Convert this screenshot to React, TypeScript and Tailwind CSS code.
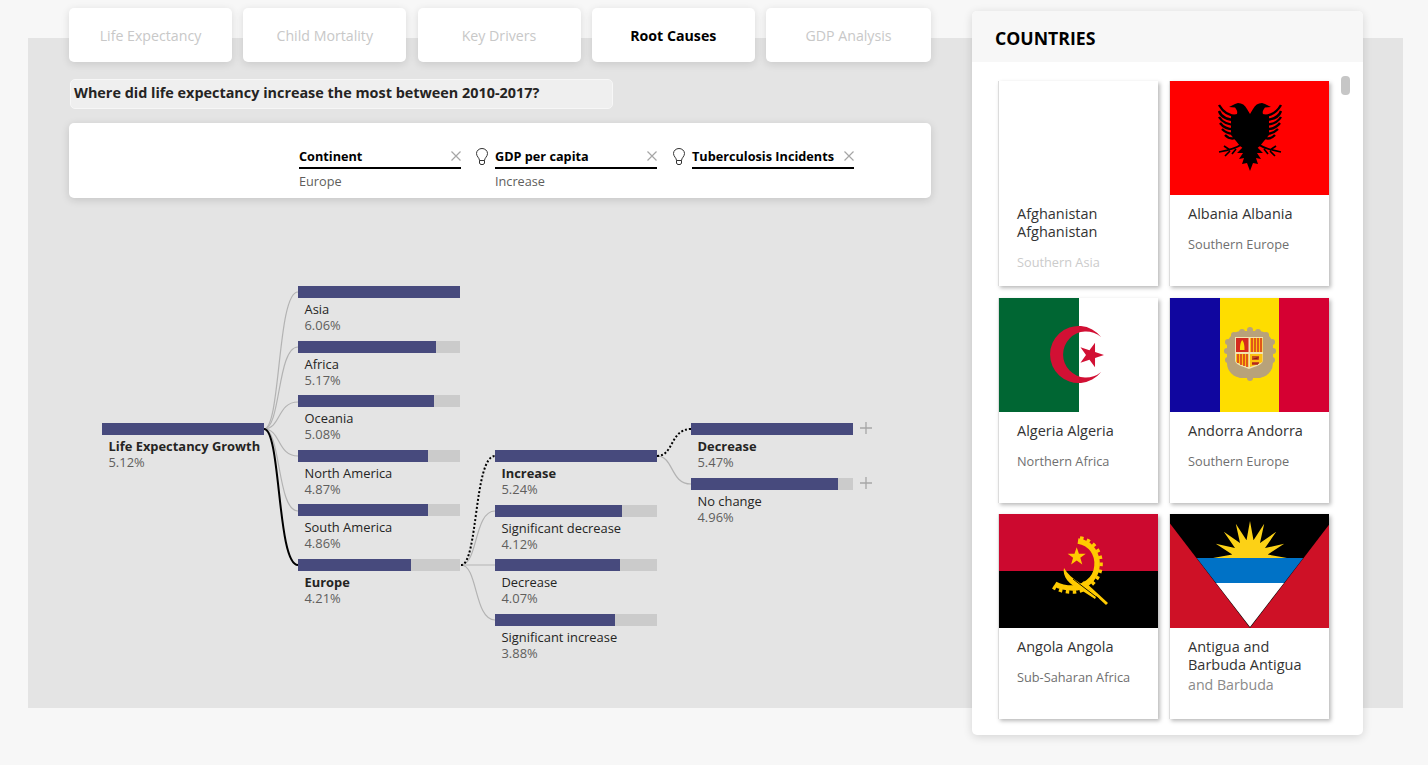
import type { ReactNode } from 'react'

const font = { fontFamily: '"Open Sans", "Noto Sans", sans-serif' }

const tabs = [
  { label: 'Life Expectancy', w: 'w-[163px]' },
  { label: 'Child Mortality', w: 'w-[163px]' },
  { label: 'Key Drivers', w: 'w-[163px]' },
  { label: 'Root Causes', w: 'w-[163px]', active: true },
  { label: 'GDP Analysis', w: 'w-[165px]' },
]

type Node = { label: string; value: string; fill: number; bold?: boolean }

const continents: Node[] = [
  { label: 'Asia', value: '6.06%', fill: 162 },
  { label: 'Africa', value: '5.17%', fill: 138 },
  { label: 'Oceania', value: '5.08%', fill: 136 },
  { label: 'North America', value: '4.87%', fill: 130 },
  { label: 'South America', value: '4.86%', fill: 130 },
  { label: 'Europe', value: '4.21%', fill: 113, bold: true },
]
const gdp: Node[] = [
  { label: 'Increase', value: '5.24%', fill: 162, bold: true },
  { label: 'Significant decrease', value: '4.12%', fill: 127 },
  { label: 'Decrease', value: '4.07%', fill: 125 },
  { label: 'Significant increase', value: '3.88%', fill: 120 },
]
const tb: Node[] = [
  { label: 'Decrease', value: '5.47%', fill: 162, bold: true },
  { label: 'No change', value: '4.96%', fill: 147 },
]

function starPoints(cx: number, cy: number, R: number, r: number, rot: number, n = 5) {
  const pts: string[] = []
  for (let i = 0; i < n * 2; i++) {
    const a = rot + (i * Math.PI) / n
    const d = i % 2 === 0 ? R : r
    pts.push(`${(cx + d * Math.cos(a)).toFixed(2)},${(cy + d * Math.sin(a)).toFixed(2)}`)
  }
  return pts.join(' ')
}

function curve(x1: number, y1: number, x2: number, y2: number) {
  const m = (x1 + x2) / 2
  return `M${x1} ${y1} C${m} ${y1} ${m - 4} ${y2} ${x2} ${y2}`
}

function Bulb() {
  return (
    <svg width="14" height="18" viewBox="0 0 14 18" fill="none" stroke="#333" strokeWidth="1" className="shrink-0">
      <path d="M4.5 12.5 C4.5 10 1.5 8.5 1.5 5.5 A5.5 5 0 0 1 12.5 5.5 C12.5 8.5 9.5 10 9.5 12.5 Z" />
      <path d="M4.5 12.5 V15 A2 2 0 0 0 6 16.5 H8 A2 2 0 0 0 9.5 15 V12.5" />
    </svg>
  )
}

function Cross() {
  return (
    <svg width="10" height="10" viewBox="0 0 10 10" stroke="#a6a6a6" strokeWidth="1.2" className="shrink-0">
      <path d="M0.5 0.5 L9.5 9.5 M9.5 0.5 L0.5 9.5" />
    </svg>
  )
}

function Plus() {
  return (
    <svg width="12" height="12" viewBox="0 0 12 12" stroke="#a6a6a6" strokeWidth="1.3" className="absolute -top-px left-[169px]">
      <path d="M6 0 V12 M0 6 H12" />
    </svg>
  )
}

function FilterItem({ title, sub }: { title: string; sub?: string }) {
  return (
    <div className="w-[162px] shrink-0">
      <div className="flex h-[21px] items-start justify-between border-b-2 border-black">
        <span className="text-[12.7px] leading-4 font-bold text-black">{title}</span>
        <span className="pt-[3px]">
          <Cross />
        </span>
      </div>
      <div className="mt-[4px] text-[12.7px] leading-4 text-[#605e5c]">{sub}</div>
    </div>
  )
}

function TreeNode({ node, plus }: { node: Node; plus?: boolean }) {
  return (
    <div className="h-[54.6px] w-[162px]">
      <div className="relative h-3 w-[162px] bg-[#cbcbcb]">
        <div className="h-3 bg-[#474a7d]" style={{ width: node.fill }} />
        {plus && <Plus />}
      </div>
      <div className={`pt-[3px] pl-[6.5px] text-[12.9px] leading-4 whitespace-nowrap text-[#252423] ${node.bold ? 'font-bold' : ''}`}>{node.label}</div>
      <div className="pl-[6.5px] text-[12.9px] leading-4 text-[#605e5c]">{node.value}</div>
    </div>
  )
}

function Connectors() {
  const gray = '#b3b3b3'
  const col2 = [292, 347, 402, 456, 511]
  return (
    <svg className="absolute top-0 left-0" width="862" height="420" viewBox="69 280 862 420" fill="none">
      {col2.map((y) => (
        <path key={y} d={curve(264, 429, 298, y)} stroke={gray} strokeWidth="1.2" />
      ))}
      <path d={curve(264, 429, 298, 565)} stroke="#000" strokeWidth="2" />
      <path d={curve(461, 565, 495, 511)} stroke={gray} strokeWidth="1.2" />
      <path d={curve(461, 565, 495, 565)} stroke={gray} strokeWidth="1.2" />
      <path d={curve(461, 565, 495, 620)} stroke={gray} strokeWidth="1.2" />
      <path d={curve(461, 565, 495, 456)} stroke="#000" strokeWidth="2" strokeDasharray="2 2" />
      <path d={curve(657, 456, 691, 484)} stroke={gray} strokeWidth="1.2" />
      <path d={curve(657, 456, 691, 429)} stroke="#000" strokeWidth="2" strokeDasharray="2 2" />
    </svg>
  )
}

function Tree() {
  return (
    <div className="relative mt-[82px] flex h-[420px] pt-[6px] pl-[33px]">
      <Connectors />
      <div className="relative mt-[137px]">
        <TreeNode node={{ label: 'Life Expectancy Growth', value: '5.12%', fill: 162, bold: true }} />
      </div>
      <div className="relative ml-[34px]">
        {continents.map((n) => (
          <TreeNode key={n.label} node={n} />
        ))}
      </div>
      <div className="relative mt-[164px] ml-[35px]">
        {gdp.map((n) => (
          <TreeNode key={n.label} node={n} />
        ))}
      </div>
      <div className="relative mt-[137px] ml-[34px]">
        {tb.map((n) => (
          <TreeNode key={n.label} node={n} plus />
        ))}
      </div>
    </div>
  )
}

function Flag({ children, bg }: { children: ReactNode; bg: string }) {
  return (
    <svg width="160" height="114" viewBox="0 0 160 114" className="block shrink-0" style={{ background: bg }}>
      {children}
    </svg>
  )
}

function EagleHalf() {
  const feathers = [
    'M13 35 C21 35 27 31 31 24',
    'M13 39 C22 39 29 36 31 30',
    'M13 44 C22 44 28 41 31 36',
    'M13 48 C21 49 27 46 30 42',
    'M13 52 C20 54 25 51 28 48',
    'M13 56 C18 59 22 57 25 54',
  ]
  return (
    <g>
      <path d="M0 33 L3 28 C5 24 8 22 12 22 L15 23 L21 26 L15 26.5 C14 28 12 30 13 33 L19 35 L19 54 L14 60 L10 65 L6 68 L0 72 Z" fill="#000" />
      {feathers.map((d) => (
        <path key={d} d={d} stroke="#000" strokeWidth="2.4" fill="none" />
      ))}
      <path d="M8 63 C13 67 20 69 31 71 M20 69 L26 65 M20 70 L25 75 M14 68 L18 73" stroke="#000" strokeWidth="1.7" fill="none" />
      <path d="M0 68 L7 66 L13 72 L7 72 L11 78 L6 77 L8 83 L3 82 L0 90 Z" fill="#000" />
    </g>
  )
}

function Albania() {
  return (
    <Flag bg="#ff0000">
      <g transform="translate(80 0)">
        <EagleHalf />
        <g transform="scale(-1 1)">
          <EagleHalf />
        </g>
      </g>
    </Flag>
  )
}

function Algeria() {
  return (
    <Flag bg="#ffffff">
      <rect width="80" height="114" fill="#006633" />
      <path d="M102.1 39.1 A28.5 28.5 0 1 0 102.1 73.9 A23 23 0 1 1 102.1 39.1 Z" fill="#d21034" />
      <polygon points={starPoints(92, 57, 13, 5, 0)} fill="#d21034" />
    </Flag>
  )
}

function Andorra() {
  const scallops = [
    [80, 32], [72, 34], [88, 34], [64, 37], [96, 37], [58, 44], [102, 44], [57, 53], [103, 53], [58, 62], [102, 62],
    [64, 71], [96, 71], [71, 77], [89, 77], [80, 80],
  ]
  return (
    <Flag bg="#fedd00">
      <rect width="50" height="114" fill="#10069f" />
      <rect x="109" width="51" height="114" fill="#d50032" />
      {scallops.map(([x, y]) => (
        <circle key={`${x}-${y}`} cx={x} cy={y} r="3" fill="#b8a27a" />
      ))}
      <rect x="57" y="33" width="46" height="47" rx="15" fill="#b8a27a" />
      <path d="M65 39 H93 V62 C93 67 86 68 79 71 C72 68 65 67 65 62 Z" fill="#f2e3b0" />
      <rect x="66" y="40" width="12.5" height="14" fill="#d52b1e" />
      <path d="M72.2 42 C69.8 45 70 50 70 52 H74.5 C74.5 50 74.7 45 72.2 42 Z" fill="#fedd00" />
      <rect x="80" y="40" width="12.5" height="14" fill="#fcc010" />
      <path d="M82 40 V54 M85 40 V54 M88 40 V54 M91 40 V54" stroke="#d52b1e" strokeWidth="1.4" />
      <path d="M66 56 H78.5 V69 L72 67 L66 64 Z" fill="#fcc010" />
      <path d="M68 56 V65 M71 56 V67 M74 56 V68 M77 56 V69" stroke="#d52b1e" strokeWidth="1.4" />
      <path d="M80 56 H92.5 V64 L86 67 L80 69 Z" fill="#fcc010" />
      <path d="M82 59 H89 M82 61 H88 V59 M82 65 H89 M82 66 H88" stroke="#b3261e" strokeWidth="1.6" />
    </Flag>
  )
}

function Angola() {
  return (
    <Flag bg="#000000">
      <rect width="160" height="57" fill="#cc092f" />
      <path d="M79 27 C92 29 99 40 98 52 C97 66 84 74 74 74 C67 74 61 73 56 70" fill="none" stroke="#ffcb00" strokeWidth="5.5" />
      <path d="M81 24 C95 26 103 39 102 52 C101 69 85 78 74 78 C67 78 60 77 54 73" fill="none" stroke="#ffcb00" strokeWidth="3.5" strokeDasharray="3.5 3.5" />
      <polygon points={starPoints(77.7, 42.7, 9.5, 3.8, -Math.PI / 2)} fill="#ffcb00" />
      <path d="M65 54 C63 62 70 71 82 76 L96 85 L98 81 C86 71 72 66 65 54 Z" fill="#ffcb00" />
      <path d="M84 68 L108 90" stroke="#ffcb00" strokeWidth="3" />
      <path d="M74 65 L100 85" stroke="#000" strokeWidth="0.9" />
    </Flag>
  )
}

function Antigua() {
  const rays: string[] = []
  const count = 16
  for (let i = 0; i <= count; i++) {
    const a = Math.PI + (i * Math.PI) / count
    const d = i % 2 === 0 ? 37 : 18
    rays.push(`${(80 + d * Math.cos(a)).toFixed(1)},${(44 + d * Math.sin(a)).toFixed(1)}`)
  }
  return (
    <Flag bg="#000000">
      <polygon points={rays.join(' ')} fill="#fcd116" />
      <polygon points="26.7,44 133.3,44 114,69 46,69" fill="#0072c6" />
      <polygon points="46,69 114,69 80,113" fill="#ffffff" />
      <polygon points="0,9.5 80,114 0,114" fill="#ce1126" />
      <polygon points="160,9.5 80,114 160,114" fill="#ce1126" />
    </Flag>
  )
}

function CountryCard({ flag, name, region, regionClass, tight }: { flag: ReactNode; name: string; region: string; regionClass: string; tight?: boolean }) {
  return (
    <div className="h-[205px] w-[160px] overflow-hidden border-l border-[#dcdcdc] bg-white shadow-[2px_2px_4px_rgba(0,0,0,0.28)]">
      {flag}
      <div className="pt-[10px] pr-2 pl-[18px]">
        <div className="text-[14.5px] leading-[18px] text-[#333]">{name}</div>
        <div className={`${tight ? 'mt-[2px] text-[14.2px] leading-[18px]' : 'mt-[12px] text-[12.75px] leading-[18px]'} ${regionClass}`}>{region}</div>
      </div>
    </div>
  )
}

function CountriesPanel() {
  return (
    <div className="relative -mt-[27px] ml-[41px] flex h-[724px] w-[391px] shrink-0 flex-col overflow-hidden rounded-[5px] bg-white shadow-[0_2px_10px_rgba(0,0,0,0.14)]">
      <div className="flex h-[51px] shrink-0 items-center bg-[#f7f7f7] pt-[3px] pl-[23px] text-[17.7px] font-bold text-black">COUNTRIES</div>
      <div className="grid grid-cols-[160px_160px] gap-x-[11px] gap-y-[11.5px] pt-[19px] pl-[26px]">
        <CountryCard flag={<Flag bg="#ffffff">{null}</Flag>} name="Afghanistan Afghanistan" region="Southern Asia" regionClass="text-[#cbcbcb]" />
        <CountryCard flag={<Albania />} name="Albania Albania" region="Southern Europe" regionClass="text-[#6f6f6f]" />
        <CountryCard flag={<Algeria />} name="Algeria Algeria" region="Northern Africa" regionClass="text-[#6f6f6f]" />
        <CountryCard flag={<Andorra />} name="Andorra Andorra" region="Southern Europe" regionClass="text-[#6f6f6f]" />
        <CountryCard flag={<Angola />} name="Angola Angola" region="Sub-Saharan Africa" regionClass="text-[#6f6f6f]" />
        <CountryCard flag={<Antigua />} name="Antigua and Barbuda Antigua" region="and Barbuda" regionClass="text-[#8a8a8a]" tight />
      </div>
      <div className="absolute top-[65px] left-[369px] h-[19px] w-[9px] rounded-[4px] bg-[#c6c6c6]" />
    </div>
  )
}

export default function App() {
  return (
    <div className="h-[765px] w-[1428px] overflow-hidden bg-[#f7f7f7] pt-[38px] pl-[28px]" style={font}>
      <div className="flex h-[670px] w-[1375px] bg-[#e4e4e4] pl-[41px]">
        <div className="-mt-[30px] w-[862px] shrink-0">
          <div className="flex gap-[11.25px]">
            {tabs.map((t) => (
              <div
                key={t.label}
                className={`flex h-[54px] items-center justify-center rounded-[5px] bg-white pt-px text-[14.2px] shadow-[0_2px_8px_rgba(0,0,0,0.12)] ${t.w} ${t.active ? 'font-bold text-black' : 'text-[#c8c8c8]'}`}
              >
                {t.label}
              </div>
            ))}
          </div>
          <div className="mt-[17px] ml-px flex h-[30px] w-[543px] items-center rounded-[5px] border border-[#f7f7f7] bg-[#efefef] pb-[3px] pl-[3px] text-[14.4px] font-bold text-[#252423]">
            Where did life expectancy increase the most between 2010-2017?
          </div>
          <div className="mt-[14px] flex h-[75px] rounded-[5px] bg-white pt-[25px] pl-[230px] shadow-[0_2px_8px_rgba(0,0,0,0.14)]">
            <FilterItem title="Continent" sub="Europe" />
            <div className="flex w-[34px] shrink-0 justify-center pl-[8px]">
              <Bulb />
            </div>
            <FilterItem title="GDP per capita" sub="Increase" />
            <div className="flex w-[35px] shrink-0 justify-center pl-[8px]">
              <Bulb />
            </div>
            <FilterItem title="Tuberculosis Incidents" />
          </div>
          <Tree />
        </div>
        <CountriesPanel />
      </div>
    </div>
  )
}
